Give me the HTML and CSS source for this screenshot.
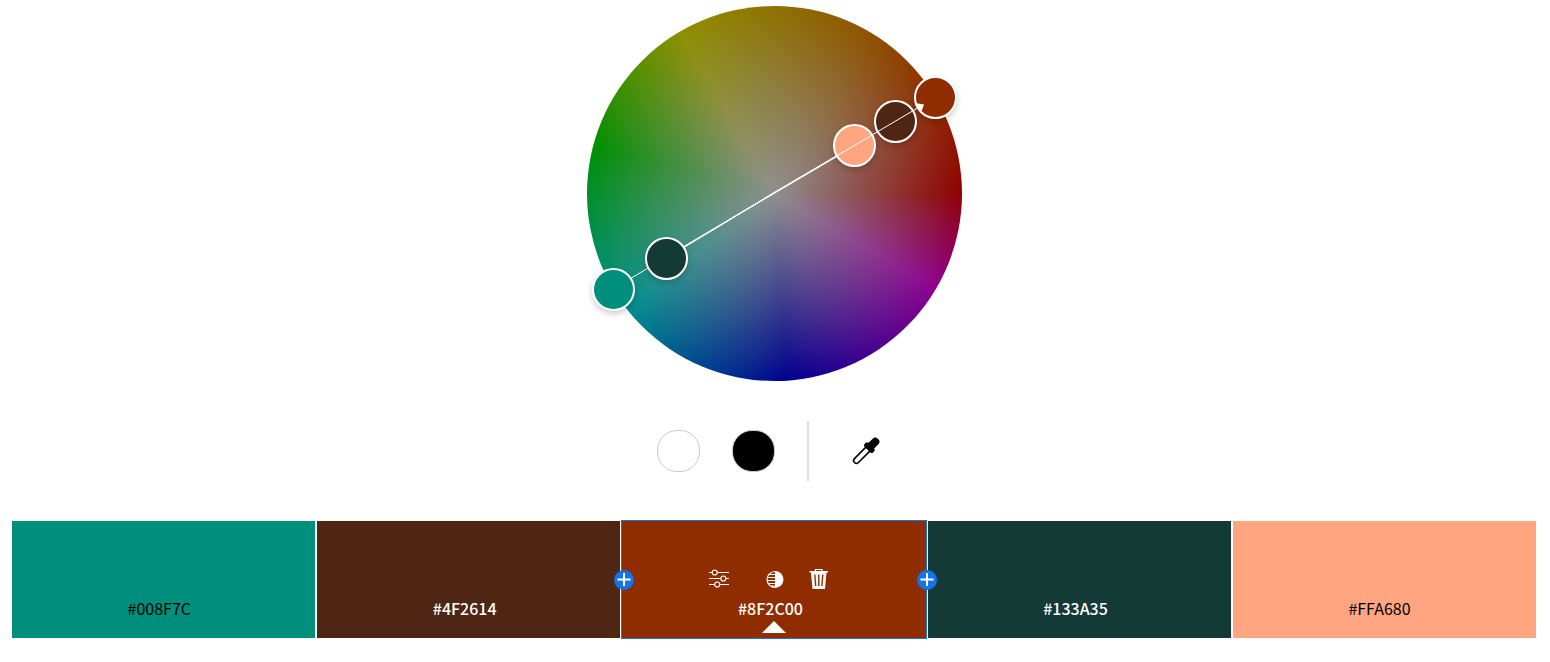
FILE: index.html
```html
<!DOCTYPE html>
<html lang="en">
<head>
<meta charset="utf-8">
<title>Color wheel</title>
<link rel="stylesheet" href="styles.css">
</head>
<body>
<main class="page">
  <section class="wheel" aria-label="Color wheel">
    <svg class="spokes" viewBox="0 0 375 375" aria-hidden="true">
      <path d="M26 283L187 187" stroke-width="1"/>
      <path d="M97 241L187 187" stroke-width="1.500"/>
    </svg>
    <button class="marker marker-teal" aria-label="#008F7C"></button>
    <button class="marker marker-pine" aria-label="#133A35"></button>
    <button class="marker marker-peach" aria-label="#FFA680"></button>
    <button class="marker marker-brown" aria-label="#4F2614"></button>
    <button class="marker marker-rust" aria-label="#8F2C00"></button>
    <svg class="spokes" viewBox="0 0 375 375" aria-hidden="true">
      <path d="M187 187L334 100" stroke-width="1"/>
      <path d="M187 187L250 150" stroke-width="1.500"/>
      <path class="tip" d="M328 97L337 98.500L334 107Z"/>
    </svg>
  </section>

  <div class="tools">
    <button class="dot dot-white" aria-label="White"></button>
    <button class="dot dot-black" aria-label="Black"></button>
    <span class="divider"></span>
    <button class="picker" aria-label="Pick a color">
      <svg width="28" height="28" viewBox="0 0 28 28" aria-hidden="true">
        <g transform="rotate(45 14 14)">
          <path d="M11.200 11V27.500a2.800 2.800 0 0 0 5.600 0V11" fill="#fff" stroke="#000" stroke-width="1.600"/>
          <rect x="8" y="6.500" width="12" height="5.500" rx="2"/>
          <rect x="10" y="-3" width="8" height="14" rx="3.500"/>
        </g>
      </svg>
    </button>
  </div>

  <section class="palette" aria-label="Palette">
    <div class="swatch teal"><input class="hex" aria-label="Color 1" value="#008F7C"></div>
    <div class="swatch brown"><input class="hex" aria-label="Color 2" value="#4F2614"></div>
    <div class="swatch rust selected">
      <div class="actions">
        <button class="action" aria-label="Adjust">
          <svg width="22" height="22" viewBox="0 0 22 22" fill="none" stroke="#fff" stroke-width="1.200" aria-hidden="true">
            <path d="M1 4.500H4M9.500 4.500H21M1 10.500H12.500M18 10.500H21M1 16.500H6.500M12 16.500H21"/>
            <circle cx="6.700" cy="4.500" r="2.500"/><circle cx="15.300" cy="10.500" r="2.500"/><circle cx="9.200" cy="16.500" r="2.500"/>
          </svg>
        </button>
        <button class="action action-shade" aria-label="Shades">
          <svg width="22" height="22" viewBox="0 0 22 22" fill="none" stroke="#fff" aria-hidden="true">
            <path d="M11 3.500a8 8 0 0 0 0 16M4.500 6.500H11M3.500 9.500H11M3 12.500H11M4 15.500H11M6 18H11" stroke-width="1.200"/>
            <path d="M11 3a8.500 8.500 0 0 1 0 17Z" fill="#fff" stroke="none"/>
          </svg>
        </button>
        <button class="action" aria-label="Delete">
          <svg width="22" height="22" viewBox="0 0 22 22" aria-hidden="true">
            <path d="M7.500 3V1.500H14V3" fill="none" stroke="#fff" stroke-width="1.200"/>
            <path d="M1.500 3H20V4.500H18.500L17 21H4.500L3 4.500H1.500Z" fill="#fff"/>
            <path d="M6.800 6.500L7.700 18M10.800 6.500V18M14.800 6.500L13.900 18" stroke="#8f2c00" stroke-width="1.400"/>
          </svg>
        </button>
      </div>
      <input class="hex" aria-label="Color 3" value="#8F2C00">
      <svg class="pointer" width="24" height="12" viewBox="0 0 24 12" aria-hidden="true"><path d="M12 0L24 12H0Z" fill="#fff"/></svg>
      <button class="add add-before" aria-label="Add color before"><svg width="20" height="20" viewBox="0 0 20 20" aria-hidden="true"><path d="M10 3V16M3.500 9.500H16.500" stroke="#fff" stroke-width="2"/></svg></button>
      <button class="add add-after" aria-label="Add color after"><svg width="20" height="20" viewBox="0 0 20 20" aria-hidden="true"><path d="M10 3V16M3.500 9.500H16.500" stroke="#fff" stroke-width="2"/></svg></button>
    </div>
    <div class="swatch pine"><input class="hex" aria-label="Color 4" value="#133A35"></div>
    <div class="swatch peach"><input class="hex" aria-label="Color 5" value="#FFA680"></div>
  </section>
</main>
</body>
</html>
```
FILE: styles.css
```css
* { box-sizing: border-box; }

body {
  margin: 0;
  background: #fff;
  color: #000;
  font: 16px/24px "Noto Sans CJK SC", "Noto Sans", sans-serif;
}

button {
  padding: 0;
  border: 0;
  background: none;
  cursor: pointer;
}

svg { display: block; }

.page {
  display: flex;
  flex-direction: column;
  padding: 6px 14px 24px 12px;
}

.wheel {
  position: relative;
  align-self: center;
  width: 375px;
  height: 375px;
  border-radius: 50%;
  background:
    radial-gradient(closest-side, #8f8f8f, rgba(143, 143, 143, 0)),
    conic-gradient(from 90deg, #8f0000, #8f008f 30deg, #00008f 86deg, #008f8f 142deg, #008f00 195deg, #8f8f00 240deg, #8f5300 300deg, #8f0000 360deg);
}

.spokes {
  position: absolute;
  inset: 0;
  width: 100%;
  height: 100%;
  fill: none;
  stroke: #fff;
  pointer-events: none;
}

.tip {
  fill: #fff;
  stroke: none;
}

.marker {
  position: absolute;
  width: 43px;
  height: 43px;
  margin: -22px 0 0 -22px;
  border: 2px solid #fff;
  border-radius: 50%;
  box-shadow: 0 3px 6px rgba(0, 0, 0, 0.2);
}

.marker-teal { left: 27px; top: 284px; background: #008f7c; }
.marker-pine { left: 80px; top: 253px; background: #133a35; }
.marker-peach { left: 268px; top: 140px; background: #ffa680; }
.marker-brown { left: 309px; top: 116px; background: #4f2614; }
.marker-rust { left: 349px; top: 92px; background: #8f2c00; }

.tools {
  display: flex;
  align-items: center;
  align-self: center;
  gap: 32px;
  margin-top: 40px;
}

.dot {
  width: 43px;
  height: 42px;
  border: 1px solid #cacaca;
  border-radius: 20px;
}

.dot-white { background: #fff; }
.dot-black { background: #000; }

.divider {
  width: 2px;
  height: 60px;
  background: #dedede;
}

.picker {
  display: grid;
  place-items: center;
  width: 50px;
  height: 42px;
}

.palette {
  display: grid;
  grid-template-columns: repeat(5, 1fr);
  gap: 2px;
  margin-top: 40px;
}

.swatch {
  position: relative;
  display: flex;
  flex-direction: column;
  align-items: center;
  justify-content: flex-end;
  min-height: 117px;
  padding-bottom: 18px;
}

.teal { background: #008f7c; }
.brown { background: #4f2614; color: #fff; }
.rust { background: #8f2c00; color: #fff; }
.pine { background: #133a35; color: #fff; }
.peach { background: #ffa680; }

.brown,
.rust,
.pine { font-weight: 500; }

.selected {
  z-index: 1;
  outline: 1px solid #1473e6;
}

.hex {
  width: 72px;
  height: 24px;
  padding: 0;
  border: 0;
  background: none;
  color: inherit;
  font: inherit;
}

.actions {
  display: flex;
  gap: 22px;
  margin-bottom: 6px;
  padding-right: 10px;
}

.action-shade { margin-left: 12px; }

.pointer {
  position: absolute;
  bottom: 5px;
  left: calc(50% - 12px);
}

.add {
  position: absolute;
  top: 49px;
  width: 20px;
  height: 20px;
  border-radius: 50%;
  background: #1473e6;
}

.add-before { left: -8px; }
.add-after { right: -11px; }
```
